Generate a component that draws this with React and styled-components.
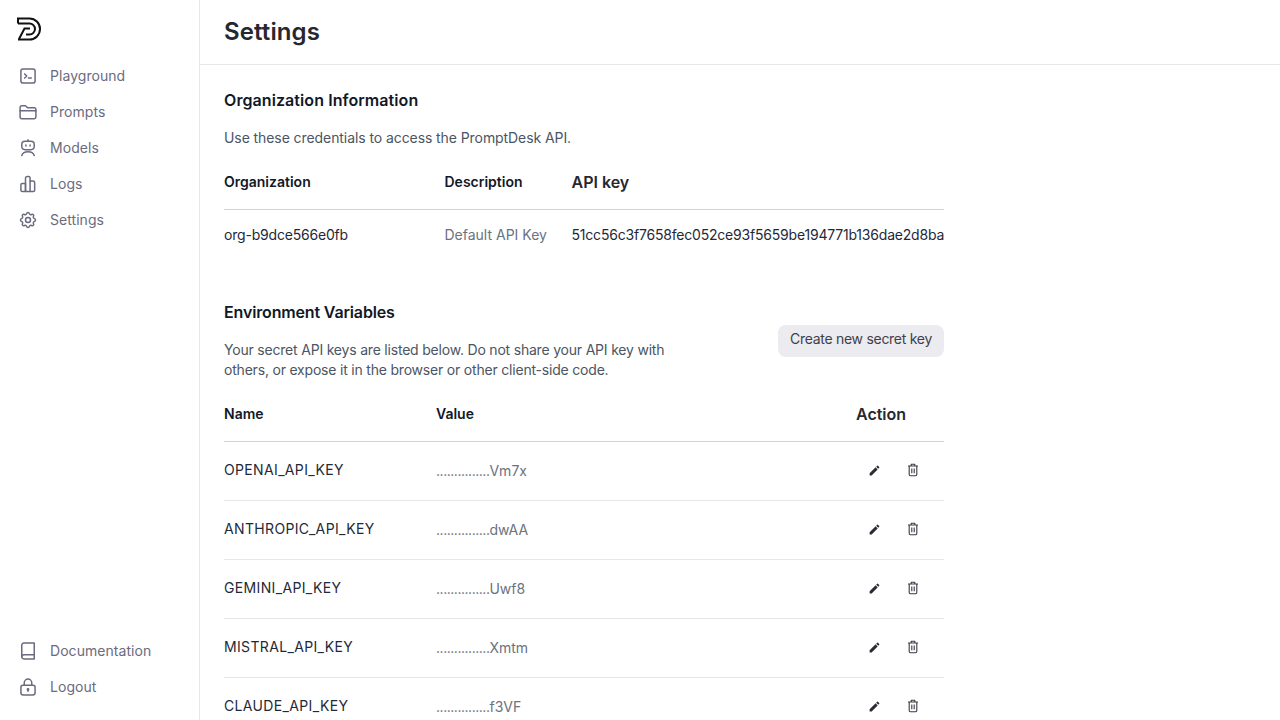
import styled, { createGlobalStyle } from 'styled-components';
import { TbSettings } from 'react-icons/tb';
import { MdEdit } from 'react-icons/md';

const GlobalStyle = createGlobalStyle`
    * { box-sizing: border-box; }
    html, body { margin: 0; height: 100%; overflow: hidden; }
    body { background: #ffffff; font-family: 'Inter', sans-serif; }
`;

function Glyph({ children }) {
    return (
        <svg width="20" height="20" viewBox="0 0 24 24" fill="none" stroke="currentColor" strokeWidth="1.8" strokeLinecap="round" strokeLinejoin="round">
            {children}
        </svg>
    );
}

const TerminalIcon = () => (
    <Glyph>
        <rect x="3.5" y="3.5" width="17" height="17" rx="2.5" />
        <path d="M8 9.500L10.500 12L8 14.500M12.500 14.500H16" />
    </Glyph>
);

const FolderIcon = () => (
    <Glyph>
        <path d="M2.500 6.500a2 2 0 0 1 2-2h4.500l2.500 2.500h8a2 2 0 0 1 2 2v9a2 2 0 0 1-2 2h-15a2 2 0 0 1-2-2Z" />
        <path d="M2.500 10.500H21.500" />
    </Glyph>
);

const RobotIcon = () => (
    <Glyph>
        <rect x="4.500" y="4" width="15" height="10" rx="4" />
        <path d="M12 2V4M9.500 8.500V9.500M14.500 8.500V9.500" />
        <path d="M4.500 21C5.500 18 8.500 16.500 12 16.500C15.500 16.500 18.500 18 19.500 21" />
    </Glyph>
);

const ChartIcon = () => (
    <Glyph>
        <path d="M3.500 13a1.500 1.500 0 0 1 1.500-1.500h4V21H5a1.500 1.500 0 0 1-1.500-1.500Z" />
        <path d="M9 5a2 2 0 0 1 2-2h1.500a2 2 0 0 1 2 2v16H9Z" />
        <path d="M14.500 8.500H18a2 2 0 0 1 2 2v9a1.500 1.500 0 0 1-1.500 1.500h-4" />
    </Glyph>
);

const GearIcon = () => <TbSettings size={20} strokeWidth={1.8} />;

const BookIcon = () => (
    <Glyph>
        <path d="M4.500 19V5a2.500 2.500 0 0 1 2.500-2.500h12.500v19H7A2.500 2.500 0 0 1 4.500 19Z" />
        <path d="M4.500 19A2.500 2.500 0 0 1 7 16.500H19.500" />
    </Glyph>
);

const LockIcon = () => (
    <Glyph>
        <rect x="3.500" y="10" width="17" height="11.500" rx="2.500" />
        <path d="M7.500 10V7a4.500 4.500 0 0 1 9 0v3" />
        <path d="M12 15V17" />
        <circle cx="12" cy="15" r="0.8" />
    </Glyph>
);

const TrashIcon = () => (
    <svg width="14" height="14" viewBox="0 0 14 14" fill="none" stroke="#3a3a44" strokeWidth="1.100" strokeLinejoin="round">
        <path d="M2 3H12M5.200 3V1.300H8.800V3" />
        <path d="M3.200 3V11.500C3.200 12.200 3.700 12.700 4.400 12.700H9.600C10.300 12.700 10.800 12.200 10.800 11.500V3" />
        <path d="M5.800 5.500V10.300M8.200 5.500V10.300" />
    </svg>
);

const Logo = () => (
    <svg width="24" height="24" viewBox="0 0 24 24" fill="none" stroke="#111111" strokeWidth="2">
        <path d="M1 6.500V1.500H12.500A10.500 10.500 0 0 1 12.500 22.500H1" />
        <path d="M1 6.500H12.500A5.500 5.500 0 0 1 12.500 17.500H9" />
        <path d="M2 22L7.500 11.500H13" />
    </svg>
);

const topLinks = [
    { label: 'Playground', Icon: TerminalIcon },
    { label: 'Prompts', Icon: FolderIcon },
    { label: 'Models', Icon: RobotIcon },
    { label: 'Logs', Icon: ChartIcon },
    { label: 'Settings', Icon: GearIcon },
];

const bottomLinks = [
    { label: 'Documentation', Icon: BookIcon },
    { label: 'Logout', Icon: LockIcon },
];

const variables = [
    { name: 'OPENAI_API_KEY', tail: 'Vm7x' },
    { name: 'ANTHROPIC_API_KEY', tail: 'dwAA' },
    { name: 'GEMINI_API_KEY', tail: 'Uwf8' },
    { name: 'MISTRAL_API_KEY', tail: 'Xmtm' },
    { name: 'CLAUDE_API_KEY', tail: 'f3VF' },
];

function App() {
    return (
        <Page>
            <GlobalStyle />
            <Sidebar>
                <LogoBox>
                    <Logo />
                </LogoBox>
                <NavList>
                    {topLinks.map(({ label, Icon }) => (
                        <NavItem key={label}>
                            <Icon />
                            <span>{label}</span>
                        </NavItem>
                    ))}
                </NavList>
                <BottomNav>
                    {bottomLinks.map(({ label, Icon }) => (
                        <NavItem key={label}>
                            <Icon />
                            <span>{label}</span>
                        </NavItem>
                    ))}
                </BottomNav>
            </Sidebar>
            <Main>
                <Header>
                    <h1>Settings</h1>
                </Header>
                <Content>
                    <SectionTitle $tracking="0.08px">Organization Information</SectionTitle>
                    <Description>Use these credentials to access the PromptDesk API.</Description>
                    <OrgHead>
                        <HeadCell>Organization</HeadCell>
                        <HeadCell>Description</HeadCell>
                        <BigHeadCell>API key</BigHeadCell>
                    </OrgHead>
                    <OrgRow>
                        <OrgValue>org-b9dce566e0fb</OrgValue>
                        <MutedCell>Default API Key</MutedCell>
                        <OrgValue>51cc56c3f7658fec052ce93f5659be194771b136dae2d8ba</OrgValue>
                    </OrgRow>

                    <EnvHeader>
                        <div>
                            <SectionTitle $tracking="-0.15px">Environment Variables</SectionTitle>
                            <EnvDescription>
                                Your secret API keys are listed below. Do not share your API key with
                                others, or expose it in the browser or other client-side code.
                            </EnvDescription>
                        </div>
                        <CreateButton>Create new secret key</CreateButton>
                    </EnvHeader>
                    <EnvHead>
                        <HeadCell>Name</HeadCell>
                        <HeadCell>Value</HeadCell>
                        <BigHeadCell>Action</BigHeadCell>
                    </EnvHead>
                    {variables.map((variable) => (
                        <EnvRow key={variable.name}>
                            <EnvName>{variable.name}</EnvName>
                            <MutedCell>
                                <Dots>...............</Dots>
                                {variable.tail}
                            </MutedCell>
                            <Actions>
                                <MdEdit size={13} color="#2b2b33" />
                                <TrashIcon />
                            </Actions>
                        </EnvRow>
                    ))}
                </Content>
            </Main>
        </Page>
    );
}

const Page = styled.div`
    display: flex;
    width: 1280px;
    height: 720px;
    overflow: hidden;
    color: #111827;
`;

const Sidebar = styled.aside`
    display: flex;
    flex-direction: column;
    flex: 0 0 200px;
    padding: 16px 0 15px;
    border-right: 1px solid #e5e7eb;
`;

const LogoBox = styled.div`
    display: flex;
    height: 24px;
    padding-left: 17px;
    padding-top: 1px;
    margin-bottom: 18px;
`;

const NavList = styled.nav`
    display: flex;
    flex-direction: column;
`;

const BottomNav = styled(NavList)`
    margin-top: auto;
`;

const NavItem = styled.a`
    display: flex;
    align-items: center;
    gap: 12px;
    height: 36px;
    padding-left: 18px;
    font-size: 14px;
    letter-spacing: 0.05px;
    color: #6b6b80;

    svg {
        flex: 0 0 20px;
    }

    span {
        padding-bottom: 2px;
    }
`;

const Main = styled.main`
    flex: 1;
    min-width: 0;
`;

const Header = styled.header`
    display: flex;
    align-items: center;
    height: 65px;
    padding: 0 24px;
    border-bottom: 1px solid #e5e7eb;

    h1 {
        margin: 0;
        font-size: 24px;
        line-height: 32px;
        font-weight: 600;
        letter-spacing: 0.1px;
        color: #27272f;
    }
`;

const Content = styled.div`
    width: 768px;
    padding: 23px 24px 0;
`;

const SectionTitle = styled.h2`
    margin: 0;
    font-size: 16px;
    line-height: 24px;
    font-weight: 600;
    letter-spacing: ${(props) => props.$tracking};
    color: #111827;
`;

const Description = styled.p`
    margin: 16px 0 0;
    font-size: 14px;
    line-height: 20px;
    letter-spacing: -0.08px;
    color: #4b5563;
`;

const EnvDescription = styled(Description)`
    width: 460px;
    letter-spacing: -0.2px;
`;

const HeadCell = styled.div`
    padding-bottom: 2px;
    font-size: 14px;
    font-weight: 600;
    color: #111827;
`;

const BigHeadCell = styled(HeadCell)`
    font-size: 16px;
    color: #27272f;
`;

const OrgHead = styled.div`
    display: grid;
    grid-template-columns: 220.5px 127px 1fr;
    align-items: center;
    height: 54px;
    margin-top: 8px;
    border-bottom: 1px solid #d1d5db;
`;

const OrgRow = styled.div`
    display: grid;
    grid-template-columns: 220.5px 127px 1fr;
    align-items: center;
    height: 50px;
    padding-bottom: 2px;
`;

const OrgValue = styled.div`
    font-size: 14px;
    letter-spacing: -0.2px;
    color: #1f2937;
    white-space: nowrap;
`;

const EnvName = styled.div`
    padding-bottom: 2px;
    font-size: 14px;
    letter-spacing: 0.35px;
    color: #1f2937;
    white-space: nowrap;
`;

const MutedCell = styled.div`
    font-size: 14px;
    color: #6b7280;
    white-space: nowrap;
`;

const Dots = styled.span`
    letter-spacing: -0.47px;
`;

const EnvHeader = styled.div`
    display: flex;
    justify-content: space-between;
    align-items: center;
    margin-top: 40px;
`;

const CreateButton = styled.button`
    height: 32px;
    margin-top: 2px;
    padding: 0 12px 5px;
    border: 0;
    border-radius: 8px;
    background: #ebebf0;
    font-family: inherit;
    font-size: 14px;
    letter-spacing: -0.28px;
    color: #3f3f4a;
`;

const EnvHead = styled.div`
    display: grid;
    grid-template-columns: 212px 420px 1fr;
    align-items: center;
    height: 54px;
    margin-top: 8px;
    border-bottom: 1px solid #d1d5db;
`;

const EnvRow = styled.div`
    display: grid;
    grid-template-columns: 212px 420px 1fr;
    align-items: center;
    height: 59px;
    padding-bottom: 2px;
    border-bottom: 1px solid #e5e7eb;
`;

const Actions = styled.div`
    display: flex;
    align-items: center;
    gap: 25px;
    padding-left: 12px;
`;

export default App;
